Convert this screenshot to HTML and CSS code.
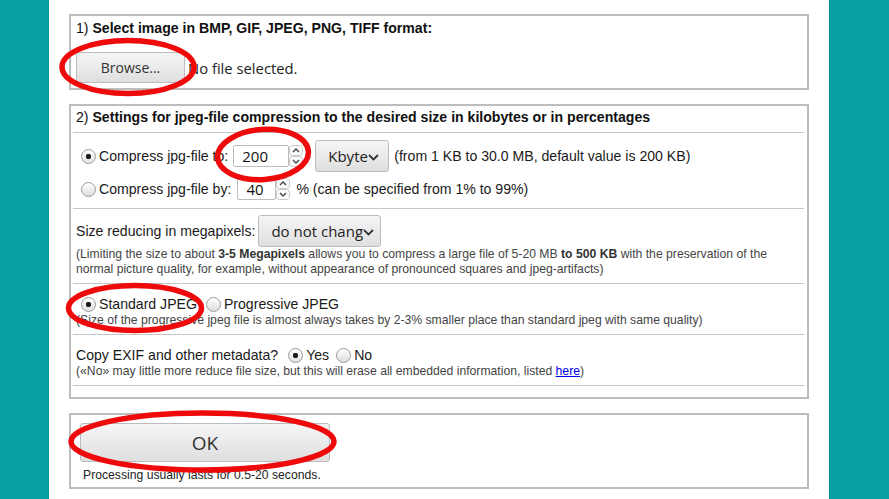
FILE: index.html
```html
<!DOCTYPE html>
<html lang="en">
<head>
  <meta charset="UTF-8">
  <title>Compress JPEG</title>
  <link rel="stylesheet" href="styles.css">
</head>
<body>
  <div class="page">
    <div class="box box-upload">
      <div class="title">1) <b>Select image in BMP, GIF, JPEG, PNG, TIFF format:</b></div>
      <div class="file-row">
        <span class="btn btn-browse">Browse...</span>
        <span class="file-name">No file selected.</span>
      </div>
    </div>

    <div class="box box-settings">
      <div class="title">2) <b>Settings for jpeg-file compression to the desired size in kilobytes or in percentages</b></div>
      <hr>
      <div class="row row-to">
        <input type="radio" name="mode" class="radio" checked>
        <span>Compress jpg-file to:</span>
        <span class="num num-size">
          <span class="num-val">200</span>
          <svg class="spin" width="14" height="22" viewBox="0 0 14 22">
            <rect x="0.5" y="0.5" width="13" height="10" rx="3" fill="#fafafa" stroke="#c8c8c8"/>
            <rect x="0.5" y="11.5" width="13" height="10" rx="3" fill="#fafafa" stroke="#c8c8c8"/>
            <path d="M4 7 L7 4 L10 7" fill="none" stroke="#444" stroke-width="1.4"/>
            <path d="M4 15 L7 18 L10 15" fill="none" stroke="#444" stroke-width="1.4"/>
          </svg>
        </span>
        <span class="btn select select-unit">Kbyte<svg class="chev" width="11" height="7" viewBox="0 0 11 7"><path d="M1 1 L5.5 5.5 L10 1" fill="none" stroke="#333" stroke-width="1.8"/></svg></span>
        <span class="hint">(from 1 KB to 30.0 MB, default value is 200 KB)</span>
      </div>
      <div class="row row-by">
        <input type="radio" name="mode" class="radio">
        <span>Compress jpg-file by:</span>
        <span class="num num-pct">
          <span class="num-val">40</span>
          <svg class="spin" width="14" height="22" viewBox="0 0 14 22">
            <rect x="0.5" y="0.5" width="13" height="10" rx="3" fill="#fafafa" stroke="#c8c8c8"/>
            <rect x="0.5" y="11.5" width="13" height="10" rx="3" fill="#fafafa" stroke="#c8c8c8"/>
            <path d="M4 7 L7 4 L10 7" fill="none" stroke="#444" stroke-width="1.4"/>
            <path d="M4 15 L7 18 L10 15" fill="none" stroke="#444" stroke-width="1.4"/>
          </svg>
        </span>
        <span class="pct">% (can be specified from 1% to 99%)</span>
      </div>
      <hr>
      <div class="row row-size">
        <span>Size reducing in megapixels:</span>
        <span class="btn select select-size"><span class="select-text">do not chang</span><svg class="chev" width="11" height="7" viewBox="0 0 11 7"><path d="M1 1 L5.5 5.5 L10 1" fill="none" stroke="#333" stroke-width="1.8"/></svg></span>
      </div>
      <div class="note">(Limiting the size to about <b>3-5 Megapixels</b> allows you to compress a large file of 5-20 MB <b>to 500 KB</b> with the preservation of the<br>normal picture quality, for example, without appearance of pronounced squares and jpeg-artifacts)</div>
      <hr>
      <div class="row row-format">
        <input type="radio" name="format" class="radio" checked>
        <span>Standard JPEG</span>
        <input type="radio" name="format" class="radio radio-gap">
        <span>Progressive JPEG</span>
      </div>
      <div class="note">(Size of the progressive jpeg file is almost always takes by 2-3% smaller place than standard jpeg with same quality)</div>
      <hr>
      <div class="row row-exif">
        <span>Copy EXIF and other metadata?</span>
        <input type="radio" name="exif" class="radio radio-yes" checked>
        <span>Yes</span>
        <input type="radio" name="exif" class="radio radio-no">
        <span>No</span>
      </div>
      <div class="note">(«No» may little more reduce file size, but this will erase all embedded information, listed <a href="#">here</a>)</div>
      <hr>
    </div>

    <div class="box box-submit">
      <span class="btn btn-ok">OK</span>
      <div class="note note-time">Processing usually lasts for 0.5-20 seconds.</div>
    </div>
  </div>

  <svg class="marks" width="889" height="499" viewBox="0 0 889 499">
    <ellipse cx="128" cy="67" rx="66" ry="26.5"/>
    <ellipse cx="263" cy="154.5" rx="45.5" ry="25" transform="rotate(-4 263 154.5)"/>
    <ellipse cx="135" cy="308" rx="66.5" ry="22.5"/>
    <ellipse cx="202.5" cy="441.5" rx="131.5" ry="28.5"/>
  </svg>
</body>
</html>
```

FILE: styles.css
```css
body {
  margin: 0;
  background-color: #0aa1a2;
  font-family: 'Liberation Sans', Arial, sans-serif;
  font-size: 14.1px;
  color: #1a1a1a;
  position: relative;
  overflow: hidden;
  height: 499px;
}
.page {
  width: 780px;
  margin-left: 49px;
  padding: 14px 0 10px;
  background: #fff;
  min-height: 499px;
  box-sizing: border-box;
  box-shadow: 0 0 2px rgba(0, 0, 0, 0.25);
}
.box {
  margin: 0 20px 14px;
  border: 2px solid #bdbdbd;
  padding: 0 3px 0 2px;
}
.title {
  line-height: 20px;
  padding-left: 3px;
  color: #111;
}
hr {
  border: 0;
  border-top: 1px solid #c6c6c6;
  margin: 6px 0 0;
}
.box-settings .title + hr {
  margin-top: 5px;
}
.btn {
  display: inline-flex;
  align-items: center;
  justify-content: center;
  box-sizing: border-box;
  border: 1px solid #bdbdbd;
  border-radius: 3px;
  background: linear-gradient(#f5f5f5, #dfdfdf);
  font-family: 'Open Sans', sans-serif;
  color: #333;
}

/* step 1 */
.box-upload {
  padding-top: 2px;
  padding-bottom: 5px;
}
.file-row {
  display: flex;
  align-items: center;
  margin-top: 14px;
  padding-left: 3px;
  height: 31px;
}
.btn-browse {
  width: 109px;
  height: 31px;
  font-size: 14px;
}
.file-name {
  margin-left: 3px;
  font-family: 'Open Sans', sans-serif;
  font-size: 14.8px;
  color: #222;
}

/* step 2 */
.box-settings {
  padding-top: 1px;
  padding-bottom: 11px;
}
.row {
  display: flex;
  align-items: center;
  padding-left: 3px;
  white-space: nowrap;
}
.radio {
  appearance: none;
  -webkit-appearance: none;
  width: 15px;
  height: 15px;
  margin: 0 3px 0 5px;
  border: 1px solid #9a9a9a;
  border-radius: 50%;
  background: linear-gradient(#ffffff, #dedede);
  box-sizing: border-box;
  flex: none;
}
.radio:checked {
  background: radial-gradient(circle, #1e1e1e 0, #1e1e1e 2.4px, transparent 3px), linear-gradient(#ffffff, #e2e2e2);
}
.radio-gap {
  margin-left: 9px;
}
.radio-yes {
  margin-left: 10px;
}
.radio-no {
  margin-left: 7px;
}
.row-to {
  margin-top: 7px;
  height: 32px;
}
.row-by {
  margin-top: 4px;
  height: 26px;
}
.num {
  display: flex;
  align-items: center;
  height: 22px;
  font-family: 'Open Sans', sans-serif;
  font-size: 15px;
  color: #111;
}
.num-val {
  height: 22px;
  line-height: 21px;
  box-sizing: border-box;
  border: 1px solid #bdbdbd;
  border-radius: 2px;
  padding-left: 8px;
}
.num-size {
  margin-left: 5px;
}
.num-size .num-val {
  width: 56px;
}
.num-pct {
  margin-left: 6px;
}
.num-pct .num-val {
  width: 39px;
}
.spin {
  display: block;
}
.select {
  height: 32px;
  font-size: 15px;
  color: #222;
  padding-left: 12px;
  justify-content: flex-start;
}
.select .chev {
  margin-top: 2px;
}
.select-unit {
  width: 74px;
  margin-left: 12px;
}
.hint {
  margin-left: 5px;
}
.pct {
  margin-left: 6px;
}
.row-size {
  margin-top: 6px;
  height: 32px;
}
.select-size {
  width: 123px;
  margin-left: 3px;
}
.note {
  font-size: 12.2px;
  line-height: 15px;
  color: #444;
  padding-left: 3px;
}
.note b {
  color: #333;
}
.note a {
  color: #0000ee;
}
.row-format,
.row-exif {
  margin-top: 11px;
  height: 18px;
}

/* step 3 */
.box-submit {
  padding-top: 8px;
  padding-bottom: 4px;
}
.btn-ok {
  width: 250px;
  height: 39px;
  margin-left: 7px;
  font-size: 19px;
}
.note-time {
  margin: 6px 0 0 7px;
  color: #222;
}

/* red marks drawn over the screenshot */
.marks {
  position: absolute;
  left: 0;
  top: 0;
  pointer-events: none;
}
.marks ellipse {
  fill: none;
  stroke: #ee0a0a;
  stroke-width: 5.5;
}
```
